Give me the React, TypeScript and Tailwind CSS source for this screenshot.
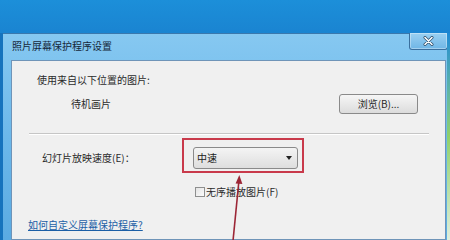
import React from 'react';

const CloseButton = () => (
  <div className="-mt-px mr-[-1px] flex h-[17px] w-[39px] items-center justify-center rounded-b-[3px] border border-t-0 border-[#3a6f9e] bg-gradient-to-b from-[#9ad0f2] to-[#6fb6e6] shadow-[inset_0_0_0_1px_rgba(255,255,255,0.35)]">
    <svg width="11" height="10" viewBox="0 0 11 10">
      <path d="M2 1.5 L9 8.5 M9 1.5 L2 8.5" stroke="#2c4a66" strokeWidth="3" strokeLinecap="round" />
      <path d="M2 1.5 L9 8.5 M9 1.5 L2 8.5" stroke="#ffffff" strokeWidth="1.6" strokeLinecap="round" />
    </svg>
  </div>
);

const App = () => {
  return (
    <div className="relative flex h-[240px] w-[450px] flex-col overflow-hidden bg-[#1a86d3] font-['Noto_Sans_CJK_SC','Noto_Sans',sans-serif] text-[10px] text-[#2a2a2a]">
      <div className="h-[33px] shrink-0 bg-gradient-to-b from-[#1c8fd9] to-[#1a84d1]" />
      <div className="flex flex-1">
        <div className="w-[3px] bg-[#1673bd]" />
        <div className="flex w-[444px] flex-col border-t border-[#3a78ad] bg-gradient-to-b from-[#86c8f1] via-[#6cb8ea] to-[#5aaae2]">
          <div className="flex h-[26px] shrink-0 items-start justify-between">
            <span className="self-center pb-[2px] pl-[9px] leading-[14px] text-[#15283a]">照片屏幕保护程序设置</span>
            <CloseButton />
          </div>
          <div className="ml-[8px] mr-[1px] flex-1 border border-[#6f94b8] bg-[#f0f0f0]">
            <div className="mt-[12px] pl-[25px] leading-[14px]">使用来自以下位置的图片:</div>

            <div className="mt-[7px] flex h-[20px] items-center justify-between pr-[27px]">
              <span className="pl-[59px] leading-[14px]">待机画片</span>
              <button className="flex h-[20px] w-[79px] items-center justify-center rounded-[3px] border border-[#8a8a8a] bg-gradient-to-b from-[#f6f6f6] to-[#dcdcdc] text-[10px] leading-[14px] text-[#2a2a2a]">
                浏览(B)...
              </button>
            </div>

            <div className="ml-[17px] mr-[16px] mt-[19px] border-b border-t border-b-white border-t-[#c6c6c6]" />

            <div className="mt-[12px] flex h-[22px] items-center">
              <span className="w-[181px] pl-[30px] leading-[14px]">幻灯片放映速度(E)：</span>
              <div className="flex h-[22px] w-[105px] items-center justify-between rounded-[3px] border border-[#8a8a8a] bg-gradient-to-b from-[#f4f4f4] to-[#dedede] pl-[3px] pr-[5px]">
                <span className="leading-[14px] text-[#1a1a1a]">中速</span>
                <span className="h-0 w-0 border-l-[3px] border-r-[3px] border-t-[4px] border-l-transparent border-r-transparent border-t-[#222]" />
              </div>
            </div>

            <div className="mt-[16px] flex h-[14px] items-center pl-[183px]">
              <span className="h-[10px] w-[10px] border border-[#8e8f8f] bg-gradient-to-br from-[#e4e4e4] to-[#fbfbfb]" />
              <span className="ml-[1px] leading-[14px]">无序播放图片(F)</span>
            </div>

            <div className="mt-[19px] pl-[16px] leading-[14px]">
              <a className="text-[#1c5fa6] underline underline-offset-[1px]">如何自定义屏幕保护程序?</a>
            </div>
          </div>
        </div>
        <div className="w-[3px] bg-gradient-to-b from-[#1f8ad4] via-[#8fd06a] to-[#dfeedd]" />
      </div>

      <div className="absolute left-[182px] top-[138px] h-[35px] w-[122px] border-2 border-[#c93a4b]" />
      <svg className="absolute left-0 top-0" width="450" height="240" viewBox="0 0 450 240">
        <path d="M233 241 L239 180" stroke="#9c2636" strokeWidth="1.6" fill="none" />
        <path d="M239.3 175 L235.6 183.5 L242.4 184 Z" fill="#9c2636" />
      </svg>
    </div>
  );
};

export default App;
